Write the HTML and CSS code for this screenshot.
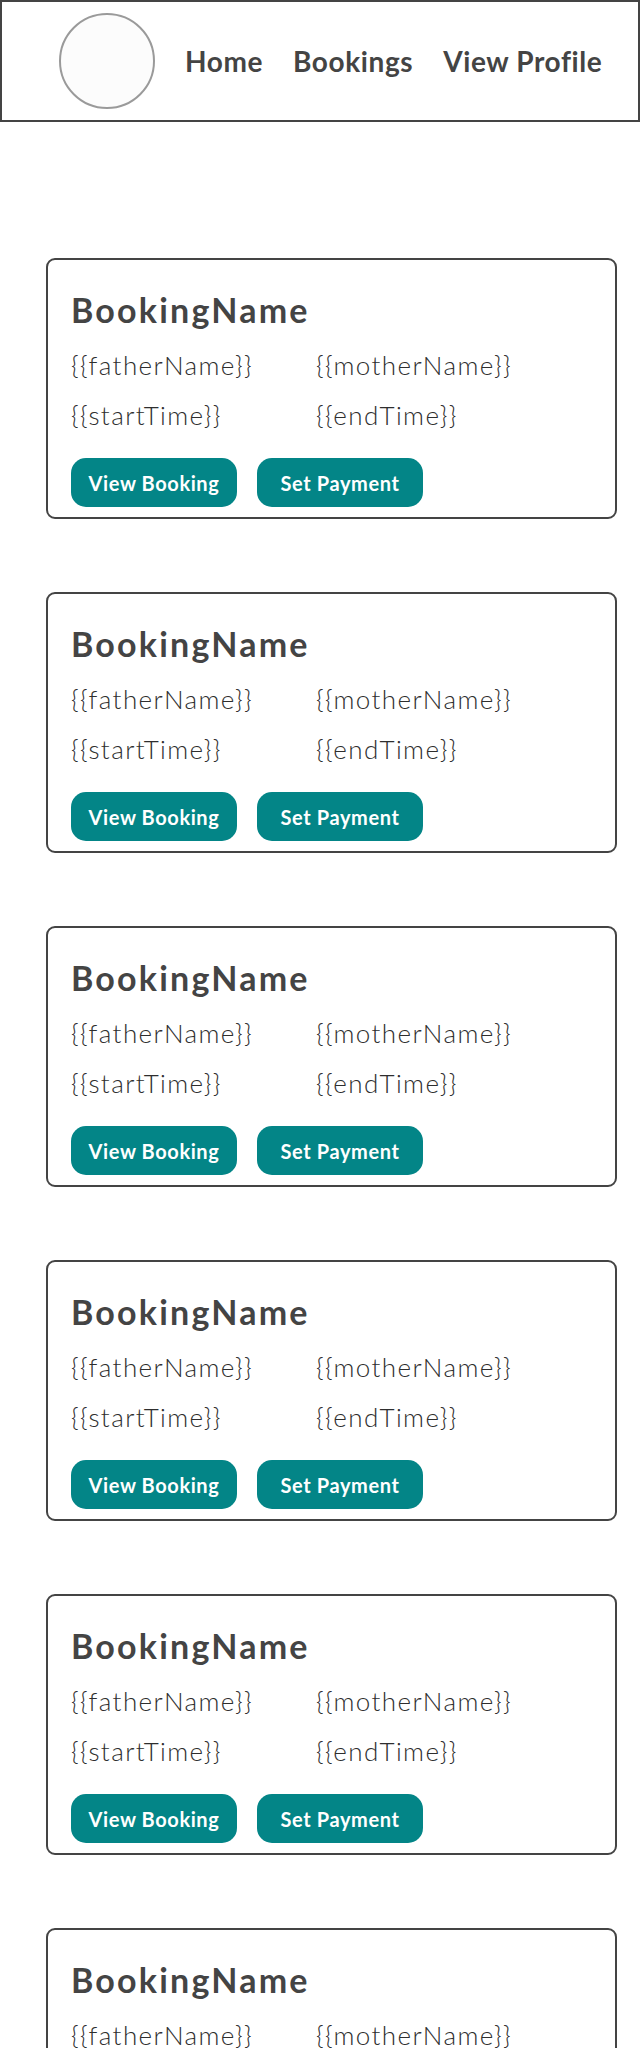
FILE: index.html
```html
<!DOCTYPE html>
<html>
<head>
<meta charset="utf-8">
<link rel="stylesheet" href="styles.css">
</head>
<body>
<header class="topbar">
  <div class="avatar"></div>
  <nav class="nav">
    <a class="nav-link" href="#">Home</a>
    <a class="nav-link" href="#">Bookings</a>
    <a class="nav-link" href="#">View Profile</a>
  </nav>
</header>
<main class="list">
  <section class="card">
    <h2 class="card-title">BookingName</h2>
    <div class="details">
      <span>{{fatherName}}</span><span>{{motherName}}</span>
      <span>{{startTime}}</span><span>{{endTime}}</span>
    </div>
    <div class="actions"><button class="btn">View Booking</button><button class="btn">Set Payment</button></div>
  </section>
  <section class="card">
    <h2 class="card-title">BookingName</h2>
    <div class="details">
      <span>{{fatherName}}</span><span>{{motherName}}</span>
      <span>{{startTime}}</span><span>{{endTime}}</span>
    </div>
    <div class="actions"><button class="btn">View Booking</button><button class="btn">Set Payment</button></div>
  </section>
  <section class="card">
    <h2 class="card-title">BookingName</h2>
    <div class="details">
      <span>{{fatherName}}</span><span>{{motherName}}</span>
      <span>{{startTime}}</span><span>{{endTime}}</span>
    </div>
    <div class="actions"><button class="btn">View Booking</button><button class="btn">Set Payment</button></div>
  </section>
  <section class="card">
    <h2 class="card-title">BookingName</h2>
    <div class="details">
      <span>{{fatherName}}</span><span>{{motherName}}</span>
      <span>{{startTime}}</span><span>{{endTime}}</span>
    </div>
    <div class="actions"><button class="btn">View Booking</button><button class="btn">Set Payment</button></div>
  </section>
  <section class="card">
    <h2 class="card-title">BookingName</h2>
    <div class="details">
      <span>{{fatherName}}</span><span>{{motherName}}</span>
      <span>{{startTime}}</span><span>{{endTime}}</span>
    </div>
    <div class="actions"><button class="btn">View Booking</button><button class="btn">Set Payment</button></div>
  </section>
  <section class="card">
    <h2 class="card-title">BookingName</h2>
    <div class="details">
      <span>{{fatherName}}</span><span>{{motherName}}</span>
      <span>{{startTime}}</span><span>{{endTime}}</span>
    </div>
    <div class="actions"><button class="btn">View Booking</button><button class="btn">Set Payment</button></div>
  </section>
</main>
</body>
</html>
```
FILE: styles.css
```css
html, body {
  margin: 0;
  padding: 0;
  background: #ffffff;
}
body {
  font-family: "Lato", "Liberation Sans", sans-serif;
  color: #444444;
}
.topbar {
  box-sizing: border-box;
  height: 122px;
  border: 2px solid #444444;
  display: flex;
  align-items: center;
  padding-left: 57px;
  gap: 30px;
}
.avatar {
  box-sizing: border-box;
  width: 96px;
  height: 96px;
  border-radius: 50%;
  border: 2px solid #9a9a9a;
  background: #fcfcfc;
  flex: none;
}
.nav {
  display: flex;
  gap: 30px;
}
.nav-link {
  font-size: 28px;
  font-weight: 700;
  letter-spacing: 0.6px;
  color: #444444;
  text-decoration: none;
}
.list {
  display: flex;
  flex-direction: column;
  gap: 73px;
  padding: 136px 23px 0 46px;
}
.card {
  box-sizing: border-box;
  width: 571px;
  height: 261px;
  flex: none;
  border: 2px solid #444444;
  border-radius: 9px;
  padding: 30px 0 0 23px;
}
.card-title {
  margin: 0;
  font-size: 34px;
  line-height: 40px;
  font-weight: 700;
  letter-spacing: 2.2px;
}
.details {
  display: grid;
  grid-template-columns: 245px auto;
  grid-auto-rows: 50px;
  margin-top: 10px;
  font-size: 26px;
  font-weight: 300;
  line-height: 50px;
  letter-spacing: 1.4px;
  color: #2e2e2e;
}
.actions {
  display: flex;
  gap: 20px;
  margin-top: 18px;
}
.btn {
  width: 166px;
  height: 49px;
  border: none;
  border-radius: 15px;
  background: #038587;
  color: #ffffff;
  font-family: "Lato", "Liberation Sans", sans-serif;
  font-size: 20px;
  font-weight: 700;
  letter-spacing: 0.6px;
  padding: 0;
}
```
